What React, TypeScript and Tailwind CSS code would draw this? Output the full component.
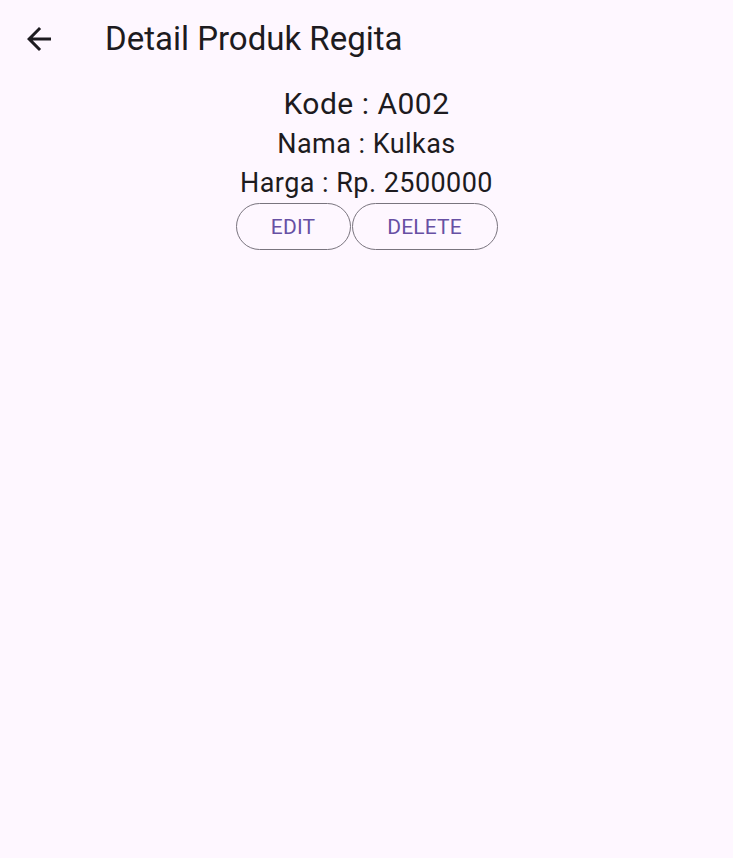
import React from "react";

const ArrowBack = () => (
  <svg width="36" height="36" viewBox="0 0 24 24" fill="#1d1b20">
    <path d="M20 11H7.83l5.59-5.59L12 4l-8 8 8 8 1.41-1.41L7.83 13H20v-2z" />
  </svg>
);

const App = () => {
  return (
    <div
      className="min-h-screen w-full bg-[#fef7ff] text-[#1d1b20]"
      style={{ fontFamily: "Roboto, 'Noto Sans', sans-serif" }}
    >
      {/* AppBar */}
      <header className="flex h-[78px] items-center">
        <button className="ml-[21px] flex h-[36px] w-[36px] items-center justify-center">
          <ArrowBack />
        </button>
        <h1 className="ml-[48px] text-[33px] leading-[78px] font-normal">
          Detail Produk Regita
        </h1>
      </header>

      {/* Detail */}
      <main className="flex flex-col items-center">
        <p className="pt-[4px] text-[30px] leading-[43px] tracking-[0.5px]">Kode : A002</p>
        <p className="text-[27px] leading-[39px] tracking-[0.45px]">Nama : Kulkas</p>
        <p className="text-[27px] leading-[39px] tracking-[0.45px]">Harga : Rp. 2500000</p>
        <div className="flex">
          <button className="h-[47px] w-[115px] rounded-full border-[1.5px] border-[#79747e] pt-[2px] text-[21px] tracking-[0.15px] text-[#6750a4]">
            EDIT
          </button>
          <button className="ml-px h-[47px] w-[146px] rounded-full border-[1.5px] border-[#79747e] pt-[2px] text-[21px] tracking-[0.15px] text-[#6750a4]">
            DELETE
          </button>
        </div>
      </main>
    </div>
  );
};

export default App;
